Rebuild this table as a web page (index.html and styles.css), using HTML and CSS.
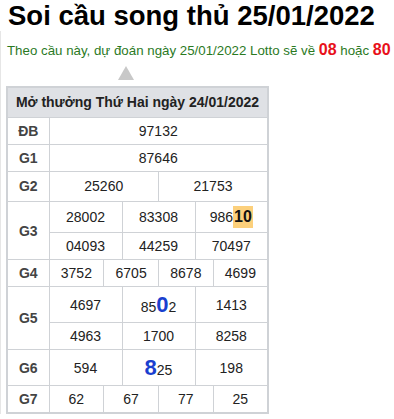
FILE: index.html
```html
<!DOCTYPE html>
<html lang="vi">
<head>
<meta charset="utf-8">
<link rel="stylesheet" href="styles.css">
</head>
<body>
<h1 class="title">Soi cầu song thủ 25/01/2022</h1>
<div class="content">
  <p class="predict">Theo cầu này, dự đoán ngày 25/01/2022 Lotto sẽ về <b class="hot">08</b> hoặc <b class="hot">80</b></p>
  <div class="arrow"></div>
  <table class="kq">
    <colgroup>
      <col class="c-lbl">
      <col><col><col><col><col><col><col><col><col><col><col><col>
    </colgroup>
    <thead>
      <tr><th colspan="13">Mở thưởng Thứ Hai ngày 24/01/2022</th></tr>
    </thead>
    <tbody>
      <tr><td class="lbl">ĐB</td><td colspan="12">97132</td></tr>
      <tr><td class="lbl">G1</td><td colspan="12">87646</td></tr>
      <tr class="r30"><td class="lbl">G2</td><td colspan="6">25260</td><td colspan="6">21753</td></tr>
      <tr><td class="lbl" rowspan="2">G3</td><td colspan="4">28002</td><td colspan="4">83308</td><td colspan="4">986<span class="mark">10</span></td></tr>
      <tr><td colspan="4">04093</td><td colspan="4">44259</td><td colspan="4">70497</td></tr>
      <tr><td class="lbl">G4</td><td colspan="3">3752</td><td colspan="3">6705</td><td colspan="3">8678</td><td colspan="3">4699</td></tr>
      <tr><td class="lbl" rowspan="2">G5</td><td colspan="4">4697</td><td colspan="4">85<span class="big">0</span>2</td><td colspan="4">1413</td></tr>
      <tr><td colspan="4">4963</td><td colspan="4">1700</td><td colspan="4">8258</td></tr>
      <tr><td class="lbl">G6</td><td colspan="4">594</td><td colspan="4"><span class="big">8</span>25</td><td colspan="4">198</td></tr>
      <tr><td class="lbl">G7</td><td colspan="3">62</td><td colspan="3">67</td><td colspan="3">77</td><td colspan="3">25</td></tr>
    </tbody>
  </table>
</div>
</body>
</html>
```
FILE: styles.css
```css
html, body {
  margin: 0;
  padding: 0;
  background: #fff;
}
body {
  font-family: "Liberation Sans", Arial, sans-serif;
  color: #222;
}
.title {
  margin: 0;
  padding: 0 0 0 8px;
  font-size: 27.5px;
  line-height: 31px;
  font-weight: bold;
  color: #000;
  white-space: nowrap;
}
.content {
  border-left: 1px solid #e6e6e6;
  padding: 4px 0 0 5px;
}
.predict {
  margin: 5px 0 0 1px;
  font-size: 13.3px;
  line-height: 20px;
  color: #2b7a1f;
  white-space: nowrap;
}
.hot {
  color: #e8101a;
  font-size: 16px;
}
.arrow {
  width: 0;
  height: 0;
  margin: 5px 0 6px 112px;
  border-left: 8px solid transparent;
  border-right: 8px solid transparent;
  border-bottom: 14px solid #c8c8c8;
}
.kq {
  border-collapse: collapse;
  width: 263px;
  table-layout: fixed;
  border: 2px solid #cfd2d6;
  font-size: 14px;
  color: #222;
}
.c-lbl {
  width: 42px;
}
.kq th {
  background: #dfe1e5;
  font-weight: bold;
  font-size: 14px;
  color: #222;
  padding: 6px 0;
  line-height: 17px;
  border: 1px solid #cfd2d6;
  white-space: nowrap;
}
.kq td {
  border: 1px solid #cfd2d6;
  text-align: center;
  padding: 5px 0;
  line-height: 16px;
  height: 16px;
}
.kq .r30 td {
  padding: 6px 0 7px;
}
.kq td.lbl {
  font-weight: bold;
  color: #444;
}
.mark {
  display: inline-block;
  background: #fcd07c;
  color: #111;
  font-weight: bold;
  font-size: 16px;
  line-height: 20px;
  padding: 1px 1px;
  margin: -1px 0;
}
.big {
  color: #1a3fcf;
  font-weight: bold;
  font-size: 22px;
  line-height: 25px;
}
```
